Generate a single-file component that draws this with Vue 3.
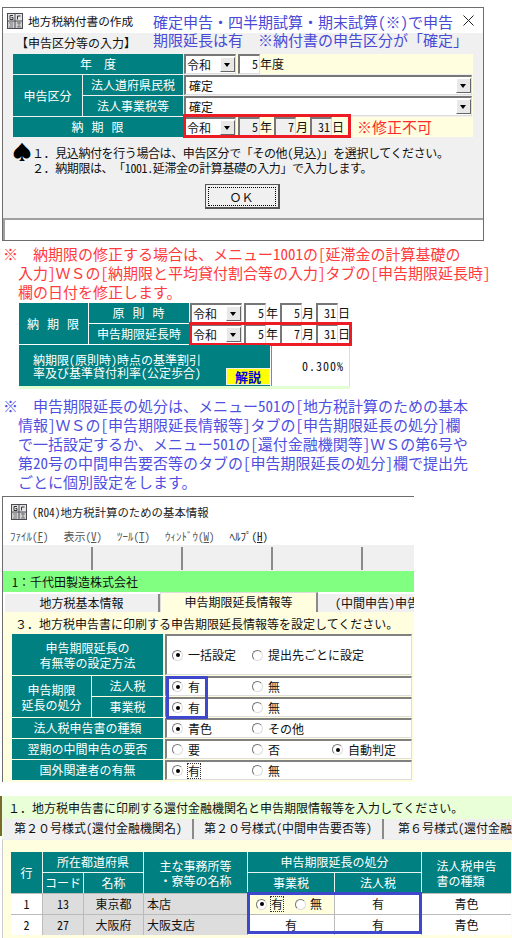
<script setup>
const jpMenu = [
  { label: 'ﾌｧｲﾙ', key: 'F' },
  { label: '表示', key: 'V' },
  { label: 'ﾂｰﾙ', key: 'T' },
  { label: 'ｳｨﾝﾄﾞｳ', key: 'W' },
  { label: 'ﾍﾙﾌﾟ', key: 'H' }
]

const taxRows = [
  { label: '法人税', cols: ['有', '無'] },
  { label: '事業税', cols: ['有', '無'] }
]
const plainRows = [
  { label: '法人税申告書の種類', cols: ['青色', 'その他'], on: 0 },
  { label: '翌期の中間申告の要否', cols: ['要', '否', '自動判定'], on: 2 },
  { label: '国外関連者の有無', cols: ['有', '無'], on: 0, focus: true }
]
</script>

<template>
  <div class="page">
    <!-- 地方税納付書の作成 -->
    <section class="win1">
      <header class="title1">
        <svg class="appicon" viewBox="0 0 16 16" width="16" height="16">
          <rect x="0" y="0" width="16" height="16" fill="#4a4a55" />
          <rect x="1" y="1" width="6.5" height="6.5" fill="#e4e4e4" />
          <rect x="8.5" y="1" width="6.5" height="6.5" fill="#e4e4e4" />
          <rect x="1" y="8.5" width="6.5" height="6.5" fill="#d0d0d0" />
          <rect x="8.5" y="8.5" width="6.5" height="6.5" fill="#d0d0d0" />
          <path d="M6 2.5H3v4h3V4.500H4.500M10.500 6.500V3h3" fill="none" stroke="#333" />
          <path d="M2 10h4M3 12h3M2 14h4M10 10h4M12 9v5M10 14h4" stroke="#666" stroke-width="0.8" />
        </svg>
        <span>地方税納付書の作成</span>
        <svg class="close" viewBox="0 0 11 11" width="11" height="11">
          <path d="M0.5 0.5l10 10M10.5 0.5l-10 10" fill="none" stroke="#222" />
        </svg>
      </header>
      <div class="body1">
        <p class="heading1">【申告区分等の入力】</p>
        <div class="form1">
          <div class="th span2 fw">年　度</div>
          <div class="yellow">
            <span class="sel"><i>令和</i><b class="drop"></b></span>
            <span class="num">5</span><span>年度</span>
          </div>
          <div class="th rows2">申告区分</div>
          <div class="th">法人道府県民税</div>
          <div class="yellow"><span class="wide"><i>確定</i><b class="drop"></b></span></div>
          <div class="th">法人事業税等</div>
          <div class="yellow"><span class="wide"><i>確定</i><b class="drop"></b></span></div>
          <div class="th span2 spaced">納 期 限</div>
          <div class="yellow">
            <span class="redbox">
              <span class="sel"><i>令和</i><b class="drop"></b></span>
              <span class="num grey">5</span><span class="unit">年</span>
              <span class="num grey">7</span><span class="unit">月</span>
              <span class="num grey">31</span><span class="unit">日</span>
            </span>
            <span class="fixed">※修正不可</span>
          </div>
        </div>
        <div class="notes">
          <span class="spade">♠</span>
          <div>
            <p><span class="fw">１．</span>見込納付を行う場合は、申告区分で「その他(見込)」を選択してください。</p>
            <p><span class="fw">２．</span>納期限は、「1001.延滞金の計算基礎の入力」で入力します。</p>
          </div>
        </div>
        <div class="okrow"><button class="ok"><span class="fw">ＯＫ</span></button></div>
      </div>
      <div class="status1"></div>
      <div class="callout">
        <p>確定申告・四半期試算・期末試算(※)で申告</p>
        <p>期限延長は有<span class="fw">　</span>※納付書の申告区分が「確定」</p>
      </div>
    </section>

    <p class="note red">※<span class="fw">　</span>納期限の修正する場合は、メニュー1001の[延滞金の計算基礎の<br />入力]<span class="fw">ＷＳ</span>の[納期限と平均貸付割合等の入力]タブの[申告期限延長時]<br />欄の日付を修正します。</p>

    <!-- 納期限テーブル -->
    <div class="form2">
      <div class="th rows2 spaced">納 期 限</div>
      <div class="th spaced">原 則 時</div>
      <div class="date">
        <span class="sel"><i>令和</i><b class="drop"></b></span>
        <span class="num">5</span><span class="unit">年</span>
        <span class="num">5</span><span class="unit">月</span>
        <span class="num">31</span><span class="unit">日</span>
      </div>
      <div class="th">申告期限延長時</div>
      <div class="date redbox2">
        <span class="sel"><i>令和</i><b class="drop"></b></span>
        <span class="num">5</span><span class="unit">年</span>
        <span class="num">7</span><span class="unit">月</span>
        <span class="num">31</span><span class="unit">日</span>
      </div>
      <div class="raterow">
        <div class="th rate">
          <span>納期限(原則時)時点の基準割引<br />率及び基準貸付利率(公定歩合)</span>
          <b class="kaisetsu">解説</b>
        </div>
        <div class="ratev">0.300%</div>
      </div>
    </div>

    <p class="note blue">※<span class="fw">　</span>申告期限延長の処分は、メニュー501の[地方税計算のための基本<br />情報]<span class="fw">ＷＳ</span>の[申告期限延長情報等]タブの[申告期限延長の処分]欄<br />で一括設定するか、メニュー501の[還付金融機関等]<span class="fw">ＷＳ</span>の第6号や<br />第20号の中間申告要否等のタブの[申告期限延長の処分]欄で提出先<br />ごとに個別設定をします。</p>

    <!-- 基本情報 -->
    <section class="win3">
      <header class="title3">
        <svg class="appicon" viewBox="0 0 16 16" width="16" height="16">
          <rect x="0" y="0" width="16" height="16" fill="#4a4a55" />
          <rect x="1" y="1" width="6.5" height="6.5" fill="#e4e4e4" />
          <rect x="8.5" y="1" width="6.5" height="6.5" fill="#e4e4e4" />
          <rect x="1" y="8.5" width="6.5" height="6.5" fill="#d0d0d0" />
          <rect x="8.5" y="8.5" width="6.5" height="6.5" fill="#d0d0d0" />
          <path d="M6 2.5H3v4h3V4.500H4.500M10.500 6.500V3h3" fill="none" stroke="#333" />
          <path d="M2 10h4M3 12h3M2 14h4M10 10h4M12 9v5M10 14h4" stroke="#666" stroke-width="0.8" />
        </svg>
        <span>(R04)地方税計算のための基本情報</span>
      </header>
      <nav class="menu">
        <span v-for="m in jpMenu" :key="m.key">{{ m.label }}(<u>{{ m.key }}</u>)</span>
      </nav>
      <div class="tools"><i v-for="n in 5" :key="n"></i></div>
      <div class="company">1<span class="fw">：</span>千代田製造株式会社</div>
      <div class="tabs3">
        <span class="tab">地方税基本情報</span>
        <span class="tab active">申告期限延長情報等</span>
        <span class="tab last">(中間申告)申告</span>
      </div>
      <div class="panel3">
        <p class="lead3"><span class="fw">３．</span>地方税申告書に印刷する申告期限延長情報等を設定してください。</p>
        <div class="form3">
          <div class="th span2 tall">申告期限延長の<br />有無等の設定方法</div>
          <div class="opts tallopt">
            <span class="opt"><i class="radio on"></i>一括設定</span>
            <span class="opt"><i class="radio"></i>提出先ごとに設定</span>
          </div>
          <div class="th rows2 tall">申告期限<br />延長の処分</div>
          <template v-for="row in taxRows" :key="row.label">
            <div class="th">{{ row.label }}</div>
            <div class="opts">
              <span class="opt"><i class="radio on"></i>{{ row.cols[0] }}</span>
              <span class="opt"><i class="radio"></i>{{ row.cols[1] }}</span>
            </div>
          </template>
          <template v-for="row in plainRows" :key="row.label">
            <div class="th span2">{{ row.label }}</div>
            <div class="opts">
              <span v-for="(c, i) in row.cols" :key="c" class="opt">
                <i class="radio" :class="{ on: i === row.on }"></i><em :class="{ dotted: row.focus && i === 0 }">{{ c }}</em>
              </span>
            </div>
          </template>
        </div>
        <div class="bluebox small"></div>
      </div>
    </section>

    <!-- 還付金融機関等 -->
    <section class="win4">
      <p class="lead4"><span class="fw">１．</span>地方税申告書に印刷する還付金融機関名と申告期限情報等を入力してください。</p>
      <div class="tabs4">
        <span class="tab t4a"><span class="fw">第２０号様式</span>(還付金融機関名)</span>
        <span class="tab t4b"><span class="fw">第２０号様式</span>(中間申告要否等)</span>
        <span class="tab t4c"><span class="fw">第６号様式</span>(還付金融機</span>
      </div>
      <div class="panel4">
        <div class="grid4">
          <div class="h r2">行</div>
          <div class="h c2">所在都道府県</div>
          <div class="h r2 lh">主な事務所等<br />・寮等の名称</div>
          <div class="h c2">申告期限延長の処分</div>
          <div class="h r2 lh">法人税申告<br />書の種類</div>
          <div class="h">コード</div>
          <div class="h">名称</div>
          <div class="h">事業税</div>
          <div class="h">法人税</div>

          <div class="d">1</div>
          <div class="d g">13</div>
          <div class="d g">東京都</div>
          <div class="d left">本店</div>
          <div class="d radios">
            <span class="opt4"><i class="radio on"></i><em class="dotted">有</em></span>
            <span class="opt4"><i class="radio"></i>無</span>
          </div>
          <div class="d">有</div>
          <div class="d">青色</div>

          <div class="d">2</div>
          <div class="d g">27</div>
          <div class="d g">大阪府</div>
          <div class="d left">大阪支店</div>
          <div class="d">有</div>
          <div class="d">有</div>
          <div class="d">青色</div>
        </div>
        <div class="bluebox big"></div>
      </div>
    </section>
  </div>
</template>

<style>
html, body { margin: 0; background: #fff; }
</style>

<style scoped>
.page {
  position: relative;
  width: 512px;
  height: 938px;
  overflow: hidden;
  background: #fff;
  font-family: "Noto Sans CJK JP", "Liberation Sans", sans-serif;
  font-feature-settings: "hwid" 1;
  font-size: 12px;
  line-height: 14px;
  color: #111;
}
p { margin: 0; }
i, em { font-style: normal; }
.fw { font-feature-settings: normal; }

.win1 {
  position: relative;
  box-sizing: border-box;
  width: 482px;
  height: 234px;
  margin: 7px 0 0 2px;
  border: 1px solid #6d6d6d;
  display: flex;
  flex-direction: column;
}
.title1 {
  flex: 0 0 25px;
  background: #fff;
  display: flex;
  align-items: center;
  gap: 5px;
  padding-left: 4px;
  font-size: 11.7px;
}
.appicon { flex: none; }
.close { margin-left: auto; margin-right: 9px; }
.body1 { flex: 1; background: #f0f0f0; padding: 0 0 0 10px; }
.heading1 { margin: 2px 0 4px 3px; height: 15px; line-height: 15px; }
.form1 {
  display: grid;
  width: 460px;
  grid-template-columns: 69px 100px 1fr;
  grid-auto-rows: 20px;
  gap: 1px;
}
.th {
  background: #008080;
  color: #fff;
  display: flex;
  align-items: center;
  justify-content: center;
  text-align: center;
}
.span2 { grid-column: span 2; }
.rows2 { grid-row: span 2; }
.spaced { letter-spacing: 1px; }
.yellow {
  background: #ffffe0;
  display: flex;
  align-items: center;
  position: relative;
}
.sel, .wide {
  box-sizing: border-box;
  display: inline-flex;
  flex: none;
  align-items: center;
  justify-content: space-between;
  height: 20px;
  background: #fff;
  border-top: 2px solid #777;
  border-left: 2px solid #777;
  border-right: 1px solid #ddd;
  border-bottom: 1px solid #ddd;
  padding-left: 1px;
}
.sel { width: 52px; margin-right: 2px; }
.wide { width: 288px; padding-left: 3px; }
.sel i, .wide i { line-height: 14px; }
.drop {
  position: relative;
  flex: none;
  width: 15px;
  height: 15px;
  background: #e8e8e8;
  border-right: 1px solid #666;
  border-bottom: 1px solid #666;
  border-top: 1px solid #fff;
  border-left: 1px solid #fff;
  box-sizing: border-box;
}
.drop::after {
  content: "";
  position: absolute;
  left: 3px;
  top: 5px;
  border: 3.5px solid transparent;
  border-top: 4px solid #000;
  border-bottom: 0;
}
.num {
  box-sizing: border-box;
  display: inline-block;
  flex: none;
  width: 22px;
  height: 20px;
  background: #fff;
  border-top: 2px solid #777;
  border-left: 2px solid #777;
  border-right: 1px solid #ddd;
  border-bottom: 1px solid #ddd;
  text-align: right;
  padding-right: 1px;
  line-height: 16px;
}
.unit { flex: none; width: 12px; margin-right: 2px; }
.grey { background: #f0f0f0; }
.redbox {
  position: relative;
  display: inline-flex;
  align-items: center;
  height: 20px;
  width: 167px;
}
.redbox::after, .redbox2::after {
  content: "";
  position: absolute;
  box-sizing: border-box;
  border: 3px solid #ed1c24;
  pointer-events: none;
}
.redbox::after { left: -1px; right: 0; top: -3px; bottom: -1px; }
.fixed { margin-left: 6px; font-size: 15px; color: #ff2a2a; }
.notes {
  display: flex;
  margin: 8px 0 0 0;
  line-height: 15px;
  letter-spacing: -0.4px;
}
.spade {
  flex: 0 0 20px;
  height: 22px;
  margin-top: -4px;
  margin-left: -1px;
  font-size: 20px;
  line-height: 22px;
  color: #000;
}
.okrow { display: flex; justify-content: center; margin: 9px 0 0 -12px; }
.ok {
  box-sizing: border-box;
  width: 75px;
  height: 25px;
  padding: 2px;
  background: #f0f0f0;
  border: 1px solid #555;
  border-right: 2px solid #555;
  border-bottom: 2px solid #555;
  font: inherit;
  color: #111;
}
.ok span {
  display: block;
  height: 17px;
  line-height: 17px;
  border: 1px dotted #000;
}
.status1 {
  flex: 0 0 22px;
  box-sizing: border-box;
  background: #fff;
  border-top: 2px solid #a0a0a0;
  border-left: 2px solid #a0a0a0;
}
.callout {
  position: absolute;
  left: 150px;
  top: 5px;
  font-size: 15px;
  line-height: 18px;
  color: #4a4ad6;
  white-space: nowrap;
}
.note {
  font-size: 15px;
  line-height: 19px;
  white-space: nowrap;
  margin-left: 18px;
  text-indent: -15px;
}
.red { margin-top: 3px; color: #ff3b3b; }
.blue { margin-top: 7px; color: #4f4fe0; }

.form2 {
  display: grid;
  width: 331px;
  margin: 2px 0 0 19px;
  grid-template-columns: 69px 100px 160px;
  grid-template-rows: 20px 20px 41px;
  gap: 1px;
  background: #fff;
  border-bottom: 3px solid #e2ffd2;
}
.date {
  position: relative;
  display: flex;
  align-items: center;
  background: #fff;
}
.redbox2::after { left: -1px; right: -2px; top: -2px; bottom: -2px; }
.raterow {
  grid-column: 1 / -1;
  display: flex;
}
.rate {
  flex: 0 0 251px;
  position: relative;
  justify-content: flex-start;
  text-align: left;
  padding-left: 14px;
  box-sizing: border-box;
  line-height: 13px;
  white-space: nowrap;
}
.kaisetsu {
  position: absolute;
  right: 0;
  bottom: 1px;
  width: 44px;
  height: 17px;
  line-height: 16px;
  text-align: center;
  background: #ffff00;
  color: #0000e0;
  font-size: 13px;
  border: 1px solid #eee;
  box-sizing: border-box;
}
.ratev {
  flex: 1;
  display: flex;
  align-items: center;
  justify-content: flex-end;
  padding-right: 5px;
  background: #fff;
  margin-left: 1px;
  border-left: 1px solid #888;
  border-right: 1px solid #ddd;
  letter-spacing: 1px;
}

.win3 {
  box-sizing: border-box;
  width: 412px;
  height: 286px;
  margin: 5px 0 0 2px;
  border-top: 1px solid #6d6d6d;
  border-left: 1px solid #6d6d6d;
  display: flex;
  flex-direction: column;
  overflow: hidden;
}
.title3 {
  flex: 0 0 30px;
  display: flex;
  align-items: center;
  gap: 5px;
  padding-left: 8px;
  font-size: 11.4px;
  color: #222;
}
.menu {
  flex: 0 0 18px;
  display: flex;
  gap: 15px;
  padding-left: 7px;
  align-items: center;
  font-size: 11px;
  color: #555;
}
.menu u { text-underline-offset: 1px; }
.menu span:last-child { color: #222; }
.tools {
  flex: 0 0 26px;
  box-sizing: border-box;
  display: flex;
  background: #f0f0f0;
  padding: 2px 0 1px 0;
}
.tools i {
  flex: 0 0 90px;
  box-sizing: border-box;
  border-right: 2px solid #8a8a8a;
}
.company {
  flex: 0 0 21px;
  background: #80ff80;
  line-height: 21px;
  padding-left: 9px;
}
.tabs3 {
  flex: 0 0 20px;
  display: flex;
  background: #fff;
  padding-left: 2px;
  overflow: hidden;
  white-space: nowrap;
}
.tab {
  box-sizing: border-box;
  display: inline-block;
  flex: none;
  background: #f0f0f0;
  text-align: center;
  border-right: 2px solid #8a8a8a;
  line-height: 18px;
}
.tabs3 .tab { width: 155px; margin-top: 2px; }
.tabs3 .tab.active {
  width: 158px;
  margin-top: 0;
  background: #ffffe0;
  border-top: 1px solid #ddd;
  border-left: 1px solid #ddd;
}
.tabs3 .tab.last { width: 100px; border: 0; text-align: left; padding-left: 17px; }
.panel3 {
  position: relative;
  flex: 1;
  background: #ffffe0;
  padding-left: 9px;
}
.lead3 { height: 22px; line-height: 24px; padding-left: 3px; }
.form3 {
  display: grid;
  width: 400px;
  grid-template-columns: 79px 71px 1fr;
  grid-template-rows: 41px repeat(5, 20px);
  gap: 1px;
}
.tall { line-height: 15px; }
.opts {
  box-sizing: border-box;
  margin-left: 1px;
  background: #fff;
  border-top: 2px solid #808080;
  border-left: 2px solid #808080;
  border-right: 1px solid #ddd;
  border-bottom: 1px solid #ddd;
  display: grid;
  grid-template-columns: 80px 80px 1fr;
  padding-left: 5px;
  align-items: center;
}
.tallopt { grid-template-columns: 80px 1fr; }
.opt, .opt4 { display: inline-flex; align-items: center; gap: 5px; white-space: nowrap; }
.radio {
  box-sizing: border-box;
  position: relative;
  flex: none;
  display: inline-block;
  width: 11px;
  height: 11px;
  border-radius: 50%;
  background: #fff;
  border: 1px solid;
  border-color: #777 #ddd #ddd #777;
}
.radio.on::after {
  content: "";
  position: absolute;
  left: 2.5px;
  top: 2.5px;
  width: 4px;
  height: 4px;
  border-radius: 50%;
  background: #000;
}
.dotted { outline: 1px dotted #333; outline-offset: 0; }
.bluebox {
  position: absolute;
  box-sizing: border-box;
  border: 3px solid #3f48cc;
  pointer-events: none;
}
.small { left: 163px; top: 64px; width: 42px; height: 43px; }

.win4 {
  box-sizing: border-box;
  width: 512px;
  height: 145px;
  margin: 14px 0 0 0;
  padding-left: 2px;
  display: flex;
  flex-direction: column;
  background: linear-gradient(#7a6a30, #7a6a30) left top / 2px 40px no-repeat;
}
.lead4 {
  flex: 0 0 23px;
  background: #e8ffd8;
  line-height: 23px;
  padding-left: 6px;
  white-space: nowrap;
}
.tabs4 {
  flex: 0 0 20px;
  display: flex;
  background: #e8ffd8;
  white-space: nowrap;
  overflow: hidden;
}
.t4a { flex: 0 0 190px; margin-left: 2px; }
.t4b { flex: 0 0 190px; }
.t4c { flex: 0 0 128px; text-align: left; padding-left: 14px; border-right: 0; }
.panel4 {
  position: relative;
  flex: 1;
  background: #ffffe0;
  padding: 12px 0 0 8px;
  overflow: hidden;
  border-left: 1px solid #ccc;
  border-top: 1px solid #eee;
}
.grid4 {
  display: grid;
  width: 500px;
  grid-template-columns: 31px 40px 59px 103px 86px 86px 89px;
  grid-template-rows: 20px 20px 20px 20px;
  gap: 1px;
  background: linear-gradient(#e8f4f4 0 41px, #bbb 41px);
}
.h {
  background: #008080;
  color: #fff;
  display: flex;
  align-items: center;
  justify-content: center;
  text-align: center;
}
.lh { line-height: 15px; text-align: left; }
.r2 { grid-row: span 2; }
.c2 { grid-column: span 2; }
.d {
  background: #fff;
  display: flex;
  align-items: center;
  justify-content: center;
}
.g { background: #ddd; }
.left { background: #ddd; justify-content: flex-start; padding-left: 3px; }
.radios {
  background: #ffffe0;
  justify-content: flex-start;
  padding-left: 8px;
  gap: 12px;
}
.opt4 { gap: 4px; }
.big { left: 244px; top: 52px; width: 175px; height: 42px; }
</style>
